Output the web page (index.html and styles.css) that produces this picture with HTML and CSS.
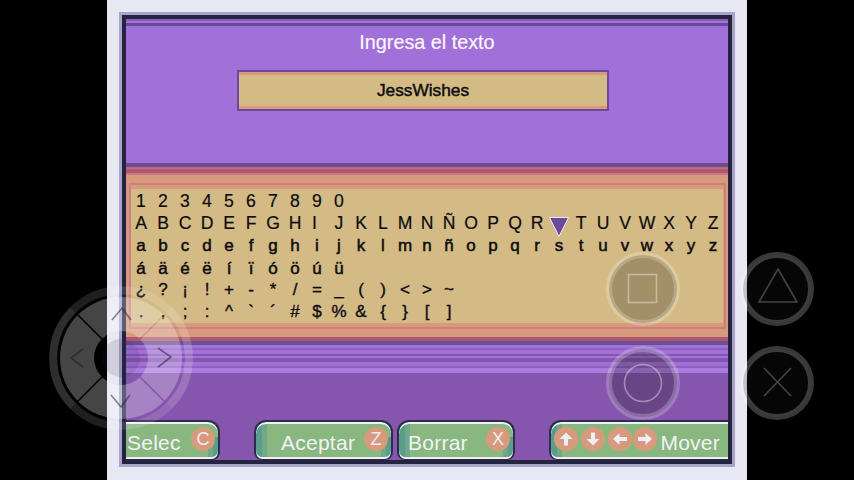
FILE: index.html
```html
<!DOCTYPE html>
<html lang="es">
<head>
<meta charset="utf-8">
<title>Ingresa el texto</title>
<link rel="stylesheet" href="styles.css">
</head>
<body>
<main class="screen">
  <div class="frame">
    <section class="head">
      <div class="head-bands"></div>
      <h1 class="title">Ingresa el texto</h1>
      <div class="entry"><span>JessWishes</span></div>
    </section>
    <section class="keyboard">
      <div class="kb-top"></div>
      <div class="kb-box">
        <div class="panel">
          <div class="row"><span>1</span><span>2</span><span>3</span><span>4</span><span>5</span><span>6</span><span>7</span><span>8</span><span>9</span><span>0</span></div>
          <div class="row"><span>A</span><span>B</span><span>C</span><span>D</span><span>E</span><span>F</span><span>G</span><span>H</span><span class="nudge-l">I</span><span>J</span><span>K</span><span>L</span><span>M</span><span>N</span><span>Ñ</span><span>O</span><span>P</span><span>Q</span><span>R</span><span class="cursor"><svg width="20" height="20" viewBox="0 0 20 20"><polygon points="0.5,0.5 19.5,0.5 10,19.5" fill="#6a4a9c" stroke="#f0e8f4" stroke-width="1"/></svg></span><span>T</span><span>U</span><span>V</span><span>W</span><span>X</span><span>Y</span><span>Z</span></div>
          <div class="row low"><span>a</span><span>b</span><span>c</span><span>d</span><span>e</span><span>f</span><span>g</span><span>h</span><span>i</span><span>j</span><span>k</span><span>l</span><span>m</span><span>n</span><span>ñ</span><span>o</span><span>p</span><span>q</span><span>r</span><span>s</span><span>t</span><span>u</span><span>v</span><span>w</span><span>x</span><span>y</span><span>z</span></div>
          <div class="row low"><span>á</span><span>ä</span><span>é</span><span>ë</span><span>í</span><span>ï</span><span>ó</span><span>ö</span><span>ú</span><span>ü</span></div>
          <div class="row sym"><span>¿</span><span>?</span><span>¡</span><span>!</span><span>+</span><span>-</span><span>*</span><span>/</span><span>=</span><span>_</span><span>(</span><span>)</span><span>&lt;</span><span>&gt;</span><span>~</span></div>
          <div class="row sym"><span>.</span><span>,</span><span>;</span><span>:</span><span>^</span><span>`</span><span>´</span><span>#</span><span>$</span><span>%</span><span>&amp;</span><span>{</span><span>}</span><span>[</span><span>]</span></div>
        </div>
      </div>
      <div class="kb-bottom"></div>
    </section>
    <div class="stripes"></div>
    <footer class="footer">
      <div class="btn btn-selec"><span class="label">Selec</span><span class="badge">C</span></div>
      <div class="btn btn-aceptar"><span class="label">Aceptar</span><span class="badge">Z</span></div>
      <div class="btn btn-borrar"><span class="label">Borrar</span><span class="badge">X</span></div>
      <div class="btn btn-mover">
        <span class="badge arrow"><svg width="18" height="18" viewBox="0 0 18 18"><path d="M9 2.5 15.5 9H11V15.5H7V9H2.5Z"/></svg></span>
        <span class="badge arrow"><svg width="18" height="18" viewBox="0 0 18 18"><path d="M9 15.5 2.5 9H7V2.5H11V9H15.5Z"/></svg></span>
        <span class="badge arrow"><svg width="18" height="18" viewBox="0 0 18 18"><path d="M2 9 8.5 3V7H16V11H8.5V15Z"/></svg></span>
        <span class="badge arrow"><svg width="18" height="18" viewBox="0 0 18 18"><path d="M16 9 9.5 3V7H2V11H9.5V15Z"/></svg></span>
        <span class="label">Mover</span>
      </div>
    </footer>
  </div>
</main>
<svg class="touch" width="854" height="480" viewBox="0 0 854 480" aria-hidden="true">
  <defs>
    <mask id="dpad-mask" maskUnits="userSpaceOnUse" x="0" y="0" width="854" height="480">
      <rect width="854" height="480" fill="#fff"/>
      <circle cx="121" cy="358" r="27" fill="#000"/>
      <path d="M71 308 171 408M71 408 171 308" stroke="#000" stroke-width="1.6"/>
    </mask>
  </defs>
  <g class="dpad">
    <circle cx="121" cy="358" r="61" class="disc" mask="url(#dpad-mask)"/>
    <path class="ring-bright" d="M73 310A68 68 0 0 0 73 406"/>
    <path class="ring-bright" d="M169 310A68 68 0 0 1 169 406"/>
    <path class="ring-dim" d="M73 310A68 68 0 0 1 169 310"/>
    <path class="ring-dim" d="M73 406A68 68 0 0 0 169 406"/>
    <circle cx="121" cy="358" r="19" class="hub"/>
    <path class="chev" d="M112 320 122 308 131 320M83 349 71 358 83 367M158 348 171 357 158 367M111 395 121 407 130 395"/>
  </g>
  <g class="pad-btn">
    <circle cx="643" cy="289" r="34"/>
    <circle cx="643" cy="383" r="34"/>
    <circle cx="777" cy="289" r="34"/>
    <circle cx="777" cy="383" r="34"/>
  </g>
  <g class="pad-glyph">
    <rect x="628.5" y="274.5" width="28" height="28"/>
    <circle cx="643" cy="383" r="18.5"/>
  </g>
  <g class="pad-glyph dim">
    <path d="M778 269 797 302H759Z"/>
    <path d="M764 368 791 396M791 368 764 396"/>
  </g>
</svg>
</body>
</html>
```
FILE: styles.css
```css
* { box-sizing: border-box; }
html, body { margin: 0; padding: 0; height: 100%; }
body {
  width: 854px;
  height: 480px;
  background: #000;
  overflow: hidden;
  position: relative;
  font-family: "Liberation Sans", Arial, sans-serif;
}
.screen {
  margin-left: 107px;
  width: 640px;
  height: 480px;
  padding: 12px 12px 13px;
  background: #e8e8f4;
}
.frame {
  height: 455px;
  border: 3px solid #aaa4c8;
  background: #8656ae;
  display: flex;
  flex-direction: column;
  outline: 4px solid #242440;
  outline-offset: -7px;
  padding: 4px;
}
.head {
  height: 148px;
  flex: none;
  background: #a170d8;
  border-bottom: 4px solid #6a5090;
  display: flex;
  flex-direction: column;
  align-items: center;
}
.head-bands {
  align-self: stretch;
  height: 7px;
  background: linear-gradient(#8a5cbc 0 2px, #a170d8 2px 4px, #6a4a9a 4px);
}
.title {
  margin: 5px 0 0;
  height: 24px;
  font-size: 19.8px;
  line-height: 22px;
  font-weight: 400;
  color: #faf6ff;
  -webkit-text-stroke: 0.2px #faf6ff;
}
.entry {
  align-self: flex-start;
  margin: 15px 0 0 111px;
  width: 372px;
  height: 41px;
  border: 2px solid #6a4a9a;
  background: linear-gradient(#d89a7c 0 3px, #d4bb85 3px 34px, #d89a7c 34px);
  display: flex;
  align-items: center;
  justify-content: center;
  font-size: 17.3px;
  font-weight: 400;
  color: #0c0c10;
  -webkit-text-stroke: 0.45px #0c0c10;
}
.keyboard {
  height: 178px;
  flex: none;
  background: #d89a7c;
  display: flex;
  flex-direction: column;
}
.kb-top {
  height: 16px;
  flex: none;
  background: linear-gradient(#c06a80 0 2px, #b05870 2px 6px, #c87880 6px 8px, #d89a7c 8px);
}
.kb-box {
  margin: 0 2px 0 3px;
  height: 146px;
  flex: none;
  border: 2px solid #cc8080;
  padding: 4px 0;
  background: #d89a7c;
}
.panel {
  height: 134px;
  padding-top: 1px;
  background: #d4bb85;
  margin-right: 1px;
  color: #0c0c10;
}
.row {
  display: grid;
  grid-template-columns: repeat(27, 22px);
  height: 22.2px;
  margin-left: -1px;
  font-size: 17.6px;
  line-height: 22px;
  text-align: center;
  -webkit-text-stroke: 0.2px #0c0c10;
}
.row.low { font-size: 17px; line-height: 23px; -webkit-text-stroke: 0.5px #0c0c10; }
.row.sym { font-size: 17px; -webkit-text-stroke: 0.35px #0c0c10; }
.nudge-l { margin-right: 5px; }
.cursor { display: flex; justify-content: center; padding-top: 5px; }
.cursor svg { flex: none; }
.kb-bottom {
  height: 16px;
  flex: none;
  background: linear-gradient(#d89a7c 0 8px, #b05870 8px 12px, #6a5090 12px);
}
.stripes {
  height: 29px;
  flex: none;
  background: linear-gradient(
    #a170d8 0 3px, #8f60c2 3px 5px, #a170d8 5px 9px, #8656ae 9px 11px,
    #a170d8 11px 13px, #8656ae 13px 17px, #a170d8 17px 21px, #8f60c2 21px 23px,
    #ab7ce0 23px 28px, #8656ae 28px);
}
.footer {
  height: 86px;
  flex: none;
  padding-top: 46px;
  display: flex;
  align-items: stretch;
}
.btn {
  height: 40px;
  flex: none;
  display: flex;
  align-items: center;
  color: #f2f2f6;
  font-size: 21px;
  letter-spacing: 0.25px;
  border: 2px solid #2c2c4c;
  border-bottom: 1px solid #2c2c4c;
  border-radius: 12px 12px 8px 8px;
  box-shadow: inset 0 2px 0 #f0f0f4, inset 0 -2px 0 #f0f0f4;
  background:
    linear-gradient(90deg, #5c9c8a 0 6px, #70a888 6px 11px, transparent 11px) left top / 14px 100% no-repeat,
    linear-gradient(90deg, transparent 0 4px, #70a888 4px 9px, #5c9c8a 9px) right bottom / 14px 60% no-repeat,
    #88b880;
}
.label { padding-top: 4px; }
.badge {
  flex: none;
  width: 24px;
  height: 24px;
  border-radius: 50%;
  background: #d89a7c;
  color: #f0ecf0;
  font-size: 18px;
  line-height: 24px;
  letter-spacing: 0;
  text-align: center;
  margin-left: auto;
  margin-bottom: 3px;
}
.btn-selec {
  width: 94px;
  padding: 0 3px 0 0;
  border-left: 0;
  border-radius: 0 12px 8px 0;
  background:
    linear-gradient(90deg, transparent 0 4px, #70a888 4px 9px, #5c9c8a 9px) right bottom / 14px 60% no-repeat,
    #88b880;
}
.btn-selec .label { margin-left: 1px; }
.btn-aceptar { width: 139px; margin-left: 34px; padding: 0 3px 0 25px; }
.btn-borrar { width: 118px; margin-left: 4px; padding: 0 3px 0 9px; }
.btn-mover {
  width: 179px;
  margin-left: 34px;
  padding: 0 8px 0 2px;
  border-right: 0;
  border-radius: 12px 0 0 8px;
  background:
    linear-gradient(90deg, #5c9c8a 0 6px, #70a888 6px 11px, transparent 11px) left top / 14px 100% no-repeat,
    #88b880;
}
.badge.arrow {
  margin: 0 0 3px 1px;
  display: flex;
  align-items: center;
  justify-content: center;
}
.badge.arrow + .badge.arrow { margin-left: 3px; }
.badge.arrow + .badge.arrow + .badge.arrow + .badge.arrow { margin-left: 1px; }
.arrow svg { fill: #eeeef6; }
.btn-mover .label { margin-left: auto; }
.touch { position: absolute; left: 0; top: 0; pointer-events: none; }
.disc { fill: rgba(255, 255, 255, 0.27); }
.ring-bright, .ring-dim { fill: none; stroke-width: 8; }
.ring-bright { stroke: rgba(255, 255, 255, 0.18); }
.ring-dim { stroke: rgba(255, 255, 255, 0.12); }
.hub { fill: rgba(50, 40, 80, 0.13); }
.chev { fill: none; stroke: rgba(25, 20, 50, 0.5); stroke-width: 1.6; }
.pad-btn circle { fill: rgba(25, 25, 25, 0.26); stroke: rgba(255, 255, 255, 0.22); stroke-width: 6; }
.pad-glyph * { fill: none; stroke: rgba(255, 255, 255, 0.38); stroke-width: 1.6; }
.pad-glyph.dim * { stroke: rgba(255, 255, 255, 0.25); }
```
